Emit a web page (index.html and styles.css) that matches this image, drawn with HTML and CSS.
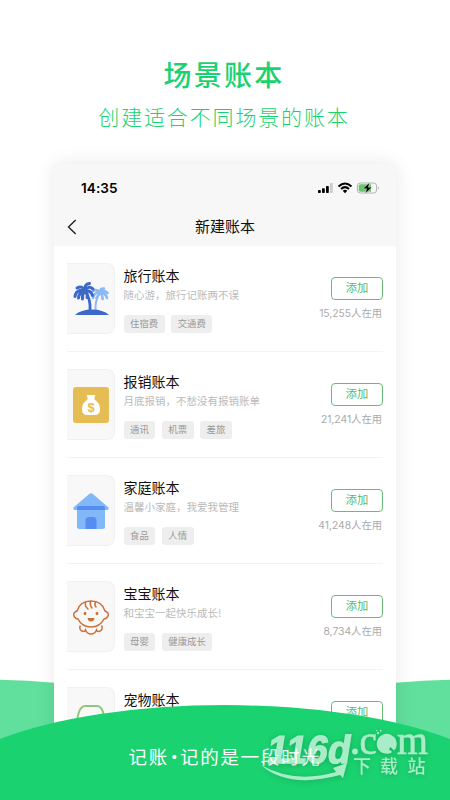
FILE: index.html
```html
<!DOCTYPE html>
<html lang="zh-CN">
<head>
<meta charset="utf-8">
<title>场景账本</title>
<link rel="stylesheet" href="styles.css">
</head>
<body>
<div class="page">
  <svg class="hills" viewBox="0 0 450 130" aria-hidden="true">
    <path d="M0 9.7Q27 10 54 12.8L140 30V130H0ZM450 9.7Q423 10 396 12.8L310 30V130H450Z"/>
  </svg>
  <header class="hero">
    <h1>场景账本</h1>
    <p>创建适合不同场景的账本</p>
  </header>
  <main class="phone">
    <div class="top">
      <div class="status">
        <span class="time">14:35</span>
        <svg class="signals" viewBox="0 0 62 12" width="62" height="12">
          <rect x="0" y="8" width="2.8" height="3" rx=".8"/><rect x="4" y="6.3" width="2.8" height="4.7" rx=".8"/><rect x="8" y="4" width="2.8" height="7" rx=".8"/><rect x="12" y="1" width="2.8" height="10" rx=".8" fill="#ccc"/>
          <g fill="none" stroke="#000" stroke-width="2"><path d="M20.5 4.4Q27 -1.5 33.500 4.400"/><path d="M23 7Q27 3.300 31 7"/></g><path d="M24.700 8.800Q27 6.900 29.300 8.800L27 11.200Z"/>
          <rect x="39.400" y="1" width="19.200" height="10" rx="3" fill="none" stroke="#aaa" stroke-width=".9"/><path d="M42.500 2.300H49V9.700H42.500Q40.700 9.700 40.700 8V4Q40.700 2.300 42.500 2.300Z" fill="#66c76a"/><rect x="49" y="2.300" width="4" height="7.400" fill="#66c76a"/><path d="M60 4.500Q62 6 60 7.500Z" fill="#aaa"/><path d="M51.500 .6L45 6.700H48.700L47.300 11.500L54 5.200H50.300Z" stroke="#f7f7f7" stroke-width=".4"/>
        </svg>
      </div>
      <div class="nav">
        <svg class="back" viewBox="0 0 10 16" width="10" height="16"><path d="M8.700 1L1.500 8L8.700 15" fill="none" stroke="#222" stroke-width="1.400"/></svg>
        <h2>新建账本</h2>
      </div>
    </div>
    <section class="list">
      <article class="row">
        <div class="thumb"><svg viewBox="0 0 36 36" width="36" height="36">
          <g fill="none" stroke="#8ab9f5" stroke-linecap="round" stroke-linejoin="round"><path d="M27 12Q22 19 22.500 29" stroke-width="2"/><path d="M27 11.500Q24 7.500 20 10M27 11.500Q21 11 20 17M27 11.500Q25 14 23.500 17M27 11.500Q27 7 31 7.500M27 11.500Q31 8.500 34.500 12M27 11.500Q33 12 34 17M27 11.500Q30 14 29.500 18" stroke-width="2.600"/></g>
          <path d="M2 34Q8 28.500 19 28.500T36 34Z" fill="#3c68c8"/>
          <g fill="none" stroke="#3c68c8" stroke-linecap="round" stroke-linejoin="round"><path d="M12 10Q18 18 17 30" stroke-width="2.800"/><path d="M12 9.500Q9 4 4 7M12 9.500Q3 8 2 15.500M12 9.500Q6 11 5.500 17M12 9.500Q9 13 9.500 18M12 9.500Q11 3 16.500 2.500M12 9.500Q15 4 20 8M12 9.500Q18 9 19.500 14.500M12 9.500Q15 12 14 16.500" stroke-width="3"/></g>
        </svg></div>
        <div class="info"><h3>旅行账本</h3><p>随心游，旅行记账两不误</p><div class="tags"><span>住宿费</span><span>交通费</span></div></div>
        <div class="action"><button>添加</button><span>15,255人在用</span></div>
      </article>
      <article class="row">
        <div class="thumb"><svg viewBox="0 0 36 36" width="36" height="36">
          <rect width="36" height="36" rx="3" fill="#e6bd55"/><path d="M13.500 8H22.500Q21 10 21.500 12.500Q27 16 27 22Q27 28 22 28H14Q9 28 9 22Q9 16 14.500 12.500Q15 10 13.500 8Z" fill="#fff"/><text x="18" y="24.500" text-anchor="middle" class="money">$</text>
        </svg></div>
        <div class="info"><h3>报销账本</h3><p>月底报销，不愁没有报销账单</p><div class="tags"><span>通讯</span><span>机票</span><span>差旅</span></div></div>
        <div class="action"><button>添加</button><span>21,241人在用</span></div>
      </article>
      <article class="row">
        <div class="thumb"><svg viewBox="0 0 36 36" width="36" height="36">
          <path d="M16.500 .8Q18 -.5 19.500 .8L35.500 14.500Q36 17 34.500 17H1.500Q0 17 .5 14.500Z" fill="#82b7f8"/><path d="M4 13H32V33.500Q32 36 29.500 36H6.500Q4 36 4 33.500Z" fill="#82b7f8"/><path d="M4 17V14.500Q4 13 6 13H30Q32 13 32 14.500V17ZM12.500 36V27.500Q12.500 24 16 24H20Q23.500 24 23.500 27.500V36Z" fill="#558df2"/>
        </svg></div>
        <div class="info"><h3>家庭账本</h3><p>温馨小家庭，我爱我管理</p><div class="tags"><span>食品</span><span>人情</span></div></div>
        <div class="action"><button>添加</button><span>41,248人在用</span></div>
      </article>
      <article class="row">
        <div class="thumb"><svg viewBox="0 0 36 36" width="36" height="36">
          <g fill="none" stroke="#cb703b" stroke-width="1.500" stroke-linecap="round"><path d="M4 12Q7 2 18 2T32 12Q37 14 34.500 18Q33 20 31 20Q27 28 18 28T5 20Q3 20 1.500 18Q-1 14 4 12Z"/><path d="M12.500 3.500Q11.500 7 15 10M17.500 2.500Q16.500 6 19 9M22.500 3.500Q21 6 23 8M7 27Q6 32 10.500 32.500Q12 32.500 12.500 31Q14 35 18 35T23.500 31Q24 32.500 25.500 32.500Q30 32 29 27"/></g><g fill="#cb703b"><ellipse cx="12" cy="14.500" rx="1.400" ry="1.700"/><ellipse cx="24" cy="14.500" rx="1.400" ry="1.700"/><path d="M14.500 19H21.500Q21 22.500 18 22.500T14.500 19Z"/></g>
        </svg></div>
        <div class="info"><h3>宝宝账本</h3><p>和宝宝一起快乐成长!</p><div class="tags"><span>母婴</span><span>健康成长</span></div></div>
        <div class="action"><button>添加</button><span>8,734人在用</span></div>
      </article>
      <article class="row">
        <div class="thumb"><svg viewBox="0 0 36 36" width="36" height="36"><path d="M4 16Q6 1 12 1H24Q28 1 30 7L32 16Q34 28 18 30Q2 28 4 16Z" fill="none" stroke="#91c77c" stroke-width="2"/></svg></div>
        <div class="info"><h3>宠物账本</h3></div>
        <div class="action"><button>添加</button></div>
      </article>
    </section>
  </main>
  <footer class="wave">
    <svg class="curve" viewBox="0 0 450 95" aria-hidden="true"><path d="M0 34A289 91 0 0 1 450 34V95H0Z"/></svg>
    <p class="slogan">记账<i>·</i>记的是一段时光</p>
    <svg class="mark" viewBox="0 0 190 66" width="190" height="66">
      <text class="digits" transform="translate(6 33) skewX(-9)" textLength="83" lengthAdjust="spacingAndGlyphs">116d</text>
      <path d="M1 35Q34 54 76 42L73 38L87 33L83 48L80 45Q28 59 1 35Z"/>
      <circle cx="95" cy="21.500" r="2.900"/>
      <text class="domain" x="99.500" y="23.500">c</text><path d="M133.500 21.500L130 18L128.500 20.500L132 23A10 10 0 1 1 136 17Q136 19.500 133.500 21.500Z" transform="translate(.5 -1)"/><path d="M117 2h2v2h-2zM120 0h1.500v1.500H120zM116 0h1v1h-1zM115 4h1v1h-1z"/><text class="domain" x="137" y="23.500" textLength="31" lengthAdjust="spacingAndGlyphs">m</text>
      <text class="site" y="42.500"><tspan x="93">下</tspan><tspan x="120">载</tspan><tspan x="147.500">站</tspan></text>
    </svg>
  </footer>
</div>
</body>
</html>
```
FILE: styles.css
```css
* { box-sizing: border-box; }
body { margin: 0; font-family: "Noto Sans CJK SC", sans-serif; }
h1, h2, h3, p { margin: 0; font-weight: 400; }
.page { position: relative; width: 450px; height: 800px; overflow: hidden; background: #fff; }
.hills { position: absolute; left: 0; top: 670px; width: 450px; height: 130px; fill: #61df9c; }
.hero { height: 164px; padding: 54px 2px 0 0; text-align: center; color: #1bd270; }
.hero h1 { font-size: 28px; line-height: 40px; font-weight: 500; letter-spacing: 2.200px; }
.hero p { margin-top: 7px; font-size: 21px; line-height: 30px; font-weight: 300; letter-spacing: 1.850px; }
.phone { position: relative; width: 342px; height: 640px; margin: 0 auto; background: #fff; box-shadow: 0 0 18px rgba(0,0,0,.09); }
.top { height: 82px; background: #f7f7f7; }
.status { height: 44px; padding: 4px 16px 0 27px; display: flex; align-items: center; justify-content: space-between; }
.time { font: 600 13.500px/18px Inter, sans-serif; color: #000; letter-spacing: .1px; }
.nav { height: 38px; display: grid; grid-template-columns: 34px 1fr 34px; align-items: center; }
.back { margin-left: 13px; }
.nav h2 { font-size: 15px; line-height: 22px; padding-bottom: 2px; text-align: center; color: #111; }
.list { padding: 0 13px; }
.row { height: 106px; padding-top: 17px; display: flex; border-bottom: 1px solid #f3f3f3; }
.thumb { width: 48px; height: 71px; display: grid; place-items: center; background: #f8f8f8; border: 1px solid #f1f1f1; border-left: 0; border-radius: 0 8px 8px 0; }
.info { flex: 1; padding-left: 8.500px; white-space: nowrap; }
.info h3 { font-size: 14px; line-height: 22px; margin-top: 1px; color: #111; }
.info p { margin-top: 1px; font-size: 10.500px; line-height: 16px; color: #bababa; }
.tags { display: flex; gap: 6.500px; margin-top: 12px; }
.tags span { height: 17.500px; padding: 0 6.500px; border-radius: 3px; background: #eee; color: #999; font-size: 9.400px; line-height: 17px; }
.action { width: 70px; padding-top: 14px; display: flex; flex-direction: column; align-items: flex-end; }
.action button { width: 52px; height: 22.500px; padding: 0 0 2px; border: 1px solid #6abc73; border-radius: 4px; background: #fff; color: #59b966; font: 400 11.300px/19px "Noto Sans CJK SC", sans-serif; }
.action span { margin-top: 5px; padding-right: 1px; color: #aaa; font: 10.300px/16px Inter, "Noto Sans CJK SC", sans-serif; white-space: nowrap; }
.money { font: 700 13px "Liberation Sans", sans-serif; fill: #e6bd55; }
.wave { position: absolute; left: 0; bottom: 0; width: 450px; height: 95px; display: flex; justify-content: center; }
.curve { position: absolute; inset: 0; width: 450px; height: 95px; fill: #1bd270; }
.slogan { position: relative; margin-top: 37px; font-size: 18.500px; line-height: 28px; letter-spacing: 1.700px; color: #fff; white-space: nowrap; }
.slogan i { display: inline-block; width: 11px; font-style: normal; text-indent: -4px; }
.mark { position: absolute; left: 260px; top: 25px; overflow: visible; fill: #fff; opacity: .62; filter: drop-shadow(0 1px 3px rgba(0,70,30,.45)); }
.digits { font: 700 39px "Liberation Sans", sans-serif; stroke: #fff; stroke-width: 1.400px; }
.domain { font: 400 39px "Liberation Serif", serif; stroke: #fff; stroke-width: .6px; }
.site { font: 500 18px "Noto Sans CJK SC", sans-serif; }
```
